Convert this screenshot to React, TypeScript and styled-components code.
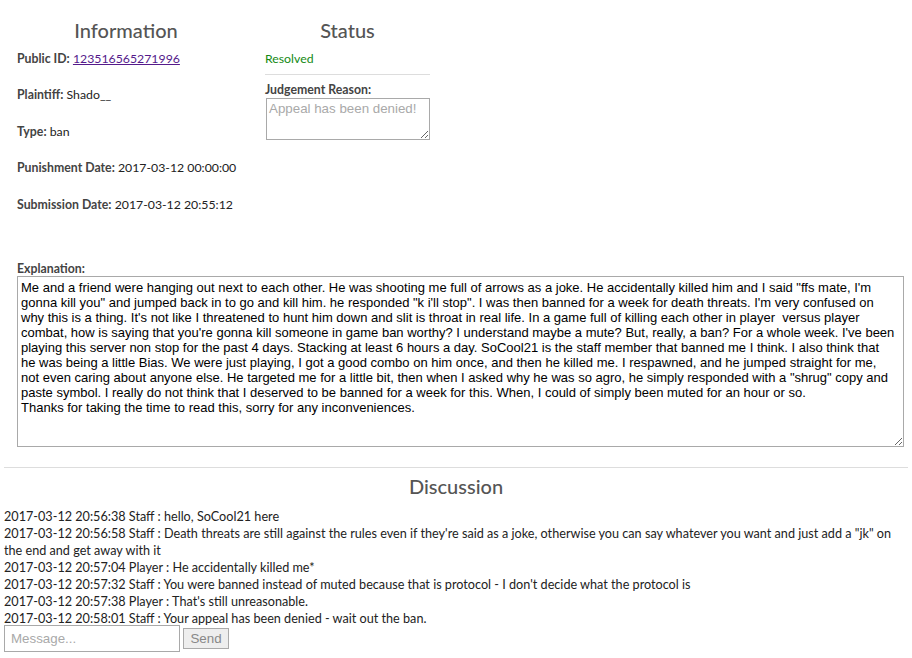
import React from "react";
import styled, { createGlobalStyle } from "styled-components";

const Global = createGlobalStyle`
  html, body { margin: 0; padding: 0; background: #fff; }
  body { font-family: Lato, "Liberation Sans", sans-serif; font-size: 12.3px; color: #333; }
`;

const Page = styled.div`
  padding: 0 4px;
  width: 904px;
`;

const Top = styled.div`
  display: flex;
  padding-top: 16px;
`;

const InfoCol = styled.div`
  width: 244px;
  padding: 0 13px;
  box-sizing: border-box;
`;

const StatusCol = styled.div`
  width: 165px;
  margin-left: 17px;
`;

const Heading = styled.h2<{ $lh?: number }>`
  margin: 0;
  font-size: 20px;
  line-height: ${(p) => p.$lh ?? 28}px;
  font-weight: 500;
  color: #555;
  text-align: center;
  white-space: nowrap;
`;

const Fields = styled.div`
  display: flex;
  flex-direction: column;
  gap: 19.5px;
  padding-top: 5.5px;
`;

const Field = styled.div<{ $lh?: number }>`
  line-height: ${(p) => p.$lh ?? 17}px;
  color: #222;
  white-space: nowrap;
`;

const Label = styled.b`
  color: #444;
  font-weight: 700;
`;

const Link = styled.a`
  color: #551a8b;
  text-decoration: underline;
`;

const Resolved = styled.div`
  line-height: 17px;
  color: #138a13;
  padding-top: 5.5px;
`;

const Rule = styled.hr<{ $m?: string }>`
  border: 0;
  border-top: 1px solid #ddd;
  margin: ${(p) => p.$m ?? "0"};
`;

const SmallTextarea = styled.textarea`
  display: block;
  box-sizing: border-box;
  width: 164px;
  height: 42px;
  margin-left: 1px;
  font-family: "Liberation Sans", Arial, sans-serif;
  font-size: 13.33px;
  border: 1px solid #a9a9a9;
  padding: 2px;
  &::placeholder { color: #a9a9a9; }
`;

const SubLabel = styled.div`
  line-height: 17px;
  margin-top: 6px;
`;

const Explanation = styled.div`
  padding: 49px 4px 0 13px;
`;

const BigTextarea = styled.textarea`
  display: block;
  box-sizing: border-box;
  width: 887px;
  height: 171px;
  font-family: "Liberation Sans", Arial, sans-serif;
  font-size: 13px;
  line-height: 15px;
  color: #000;
  border: 1px solid #a9a9a9;
  padding: 3px 8px 3px 3px;
  resize: both;
`;

const Discussion = styled.div``;

const Messages = styled.div`
  line-height: 17px;
  font-size: 12.65px;
  color: #222;
  margin-top: 11px;
`;

const Msg = styled.div``;

const Composer = styled.div`
  display: flex;
  align-items: center;
  gap: 3px;
  margin-top: -2px;
`;

const Input = styled.input`
  box-sizing: border-box;
  width: 176px;
  height: 27px;
  border: 1px solid #a9a9a9;
  padding: 2px 6px;
  font-family: "Liberation Sans", Arial, sans-serif;
  font-size: 13.33px;
  &::placeholder { color: #a9a9a9; }
`;

const SendButton = styled.button`
  box-sizing: border-box;
  width: 46px;
  height: 21px;
  border: 1px solid #aaa;
  background: #eee;
  color: #888;
  font-family: "Liberation Sans", Arial, sans-serif;
  font-size: 13.33px;
  padding: 0;
`;

const explanation = `Me and a friend were hanging out next to each other. He was shooting me full of arrows as a joke. He accidentally killed him and I said "ffs mate, I'm gonna kill you" and jumped back in to go and kill him. he responded "k i'll stop". I was then banned for a week for death threats. I'm very confused on why this is a thing. It's not like I threatened to hunt him down and slit is throat in real life. In a game full of killing each other in player  versus player combat, how is saying that you're gonna kill someone in game ban worthy? I understand maybe a mute? But, really, a ban? For a whole week. I've been playing this server non stop for the past 4 days. Stacking at least 6 hours a day. SoCool21 is the staff member that banned me I think. I also think that he was being a little Bias. We were just playing, I got a good combo on him once, and then he killed me. I respawned, and he jumped straight for me, not even caring about anyone else. He targeted me for a little bit, then when I asked why he was so agro, he simply responded with a "shrug" copy and paste symbol. I really do not think that I deserved to be banned for a week for this. When, I could of simply been muted for an hour or so.
Thanks for taking the time to read this, sorry for any inconveniences.`;

const messages = [
  "2017-03-12 20:56:38 Staff : hello, SoCool21 here",
  '2017-03-12 20:56:58 Staff : Death threats are still against the rules even if they\'re said as a joke, otherwise you can say whatever you want and just add a "jk" on the end and get away with it',
  "2017-03-12 20:57:04 Player : He accidentally killed me*",
  "2017-03-12 20:57:32 Staff : You were banned instead of muted because that is protocol - I don't decide what the protocol is",
  "2017-03-12 20:57:38 Player : That's still unreasonable.",
  "2017-03-12 20:58:01 Staff : Your appeal has been denied - wait out the ban.",
];

export default function App() {
  return (
    <Page>
      <Global />
      <Top>
        <InfoCol>
          <Heading>Information</Heading>
          <Fields>
            <Field>
              <Label>Public ID:</Label> <Link href="#">123516565271996</Link>
            </Field>
            <Field>
              <Label>Plaintiff:</Label> Shado__
            </Field>
            <Field>
              <Label>Type:</Label> ban
            </Field>
            <Field>
              <Label>Punishment Date:</Label> 2017-03-12 00:00:00
            </Field>
            <Field>
              <Label>Submission Date:</Label> 2017-03-12 20:55:12
            </Field>
          </Fields>
        </InfoCol>
        <StatusCol>
          <Heading>Status</Heading>
          <Resolved>Resolved</Resolved>
          <Rule $m="7px 0 0 0" />
          <SubLabel>
            <Label>Judgement Reason:</Label>
          </SubLabel>
          <SmallTextarea placeholder="Appeal has been denied!" readOnly />
        </StatusCol>
      </Top>
      <Explanation>
        <Field $lh={14}>
          <Label>Explanation:</Label>
        </Field>
        <BigTextarea defaultValue={explanation} readOnly />
      </Explanation>
      <Rule $m="20px 0 7px 0" />
      <Discussion>
        <Heading $lh={22}>Discussion</Heading>
        <Messages>
          {messages.map((m, i) => (
            <Msg key={i}>{m}</Msg>
          ))}
        </Messages>
        <Composer>
          <Input placeholder="Message..." />
          <SendButton>Send</SendButton>
        </Composer>
      </Discussion>
    </Page>
  );
}
